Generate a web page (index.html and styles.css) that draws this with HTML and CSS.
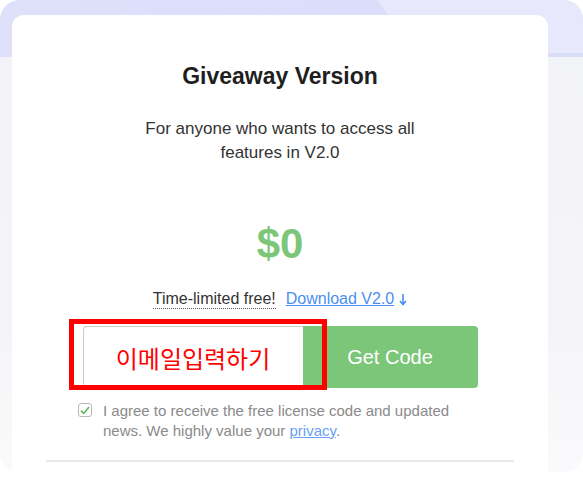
FILE: index.html
```html
<!DOCTYPE html>
<html lang="en">
<head>
  <meta charset="UTF-8" />
  <title>Giveaway Version</title>
  <link rel="stylesheet" href="styles.css">
</head>
<body>

  <div class="panel">
    <div class="card">
      <h1 class="title">Giveaway Version</h1>
      <p class="sub">For anyone who wants to access all features in V2.0</p>

      <div class="price">$0</div>

      <div class="free-line">
        <span class="free">Time-limited free!</span>
        <a class="download" href="#">Download V2.0</a>
        <svg class="arrow" width="8" height="13" viewBox="0 0 8 13">
          <path d="M4 1v10M1 8l3 3.5L7 8" fill="none" stroke="#4a8ff0" stroke-width="1.6"/>
        </svg>
      </div>

      <div class="form-row">
        <div class="email">이메일입력하기</div>
        <button class="get-code">Get Code</button>
        <!-- red highlight round the email box -->
        <div class="mark"></div>
      </div>

      <div class="agree">
        <span class="check">
          <svg width="10" height="9" viewBox="0 0 10 9">
            <path d="M1 4.6l2.7 2.8L9 1" fill="none" stroke="#5db85a" stroke-width="1.6"/>
          </svg>
        </span>
        <span class="agree-text">I agree to receive the free license code and updated news. We highly value your <a href="#">privacy</a>.</span>
      </div>

      <div class="divider"></div>
    </div>
  </div>

</body>
</html>
```

FILE: styles.css
```css
html, body {
  margin: 0;
  padding: 0;
  background: #fff;
  font-family: 'Liberation Sans', Arial, 'Noto Sans CJK KR', sans-serif;
  overflow: hidden;
}

.panel {
  position: relative;
  width: 583px;
  height: 472px;
  border-radius: 20px;
  background: linear-gradient(to bottom, #f2f3f7 0%, #f5f5f9 70%, #fafafc 100%);
  padding: 15px 35px 0 12px;
  box-sizing: border-box;
}

/* lavender band along the top */
.panel::before {
  content: "";
  position: absolute;
  top: 0;
  left: 0;
  right: 0;
  height: 57px;
  border-radius: 20px 20px 0 0;
  background: linear-gradient(to right, #dfe1fb, #d9dcf9);
}

.panel::after {
  content: "";
  position: absolute;
  top: 0;
  left: 0;
  right: 0;
  height: 53px;
  border-top-right-radius: 20px;
  background: #e8e8fc;
  clip-path: polygon(377px 0, 100% 0, 100% 100%, 416px 100%);
}

.card {
  position: relative;
  z-index: 1;
  height: 480px;
  background: #fff;
  border-radius: 12px;
  padding-top: 46px;
  box-sizing: border-box;
  text-align: center;
}

.title {
  margin: 0;
  font-size: 23px;
  line-height: 30px;
  font-weight: bold;
  color: #1f1f1f;
}

.sub {
  width: 300px;
  margin: 26px auto 0;
  font-size: 17px;
  line-height: 24px;
  color: #333;
}

.price {
  margin-top: 54px;
  font-size: 42px;
  line-height: 50px;
  font-weight: bold;
  color: #7cc679;
}

.free-line {
  margin-top: 20px;
  font-size: 16px;
  line-height: 20px;
  display: flex;
  justify-content: center;
  align-items: center;
}

.free {
  color: #333;
  border-bottom: 1px dotted #555;
  line-height: 18px;
}

.download {
  margin-left: 10px;
  color: #4a8ff0;
  text-decoration: underline;
}

.arrow {
  margin-left: 5px;
}

.form-row {
  position: relative;
  width: 395px;
  margin: 17px auto 0;
  display: flex;
}

.email {
  width: 220px;
  height: 62px;
  box-sizing: border-box;
  border: 1px solid #ccc;
  border-right: none;
  border-radius: 4px 0 0 4px;
  display: flex;
  align-items: center;
  justify-content: center;
  font-family: 'Noto Sans CJK KR', sans-serif;
  font-size: 24px;
  color: #f00;
}

.get-code {
  width: 175px;
  height: 62px;
  border: none;
  border-radius: 0 4px 4px 0;
  background: #7cc679;
  color: #fff;
  font-family: 'Liberation Sans', Arial, sans-serif;
  font-size: 20px;
  padding: 0;
}

.mark {
  position: absolute;
  left: -14px;
  top: -7px;
  width: 258px;
  height: 71px;
  box-sizing: border-box;
  border: 5px solid #f00;
}

.agree {
  width: 404px;
  margin: 13px auto 0;
  display: flex;
  gap: 11px;
  text-align: left;
  font-size: 15px;
  line-height: 20px;
  color: #8a8a8a;
}

.check {
  flex: none;
  width: 14px;
  height: 14px;
  margin-top: 2px;
  box-sizing: border-box;
  border: 1px solid #b8b8b8;
  border-radius: 3px;
  display: flex;
  align-items: center;
  justify-content: center;
}

.agree-text a {
  color: #6aa0f5;
  text-decoration: underline;
}

.divider {
  width: 468px;
  height: 2px;
  margin: 19px auto 0;
  background: #e8e8e8;
}
```
